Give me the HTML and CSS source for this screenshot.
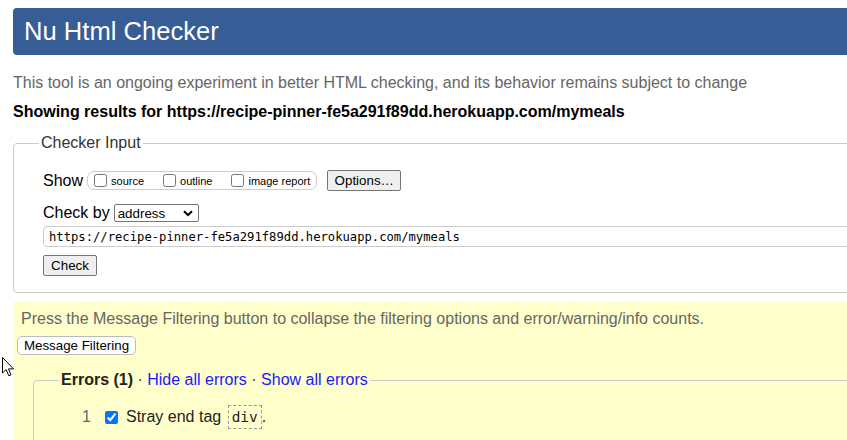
FILE: index.html
```html
<!DOCTYPE html>
<html lang="en">
<head>
<meta charset="utf-8">
<title>Nu Html Checker</title>
<link rel="stylesheet" href="styles.css">
</head>
<body>
<div class="page">
  <h1 class="title">Nu Html Checker</h1>
  <p class="intro">This tool is an ongoing experiment in better HTML checking, and its behavior remains subject to change</p>
  <p class="results-for">Showing results for https://recipe-pinner-fe5a291f89dd.herokuapp.com/mymeals</p>
  <form class="checker-form">
    <fieldset class="checker">
      <legend class="checker-legend">Checker Input</legend>
      <div class="row show-row">
        <span class="row-label">Show</span>
        <span class="show-group">
          <label class="opt"><input type="checkbox" class="cb">source</label>
          <label class="opt"><input type="checkbox" class="cb">outline</label>
          <label class="opt"><input type="checkbox" class="cb">image report</label>
        </span>
        <button type="button" class="btn options-btn">Options…</button>
      </div>
      <div class="row checkby-row">
        <span class="row-label">Check by</span>
        <span class="select">address<svg class="chev" width="10" height="7" viewBox="0 0 10 7"><path d="M1 1.2 L5 5 L9 1.2" fill="none" stroke="#000" stroke-width="2"/></svg></span>
      </div>
      <div class="url">https://recipe-pinner-fe5a291f89dd.herokuapp.com/mymeals</div>
      <button type="button" class="btn check-btn">Check</button>
    </fieldset>
  </form>
  <div class="filters">
    <p class="filters-note">Press the Message Filtering button to collapse the filtering options and error/warning/info counts.</p>
    <button type="button" class="mf-btn">Message Filtering</button>
    <fieldset class="errors">
      <legend class="errors-legend"><b>Errors (1)</b> · <a class="lnk" href="#">Hide all errors</a> · <a class="lnk" href="#">Show all errors</a></legend>
      <div class="msg">
        <span class="msg-num">1</span>
        <input type="checkbox" class="msg-cb" checked>
        <span class="msg-text">Stray end tag <code class="code">div</code>.</span>
      </div>
    </fieldset>
  </div>
</div>
<svg class="cursor" width="13" height="20" viewBox="0 0 13 20"><path d="M0.5 0.5 L0.5 16 L4.2 12.6 L6.8 18.8 L9 17.9 L6.5 11.9 L11.5 11.9 Z" fill="#fff" stroke="#000" stroke-width="1"/></svg>
</body>
</html>
```
FILE: styles.css
```css
html { overflow: hidden; background: #fff; }
body {
  margin: 0;
  padding: 8px 0 0 13px;
  font-family: "Liberation Sans", Arial, sans-serif;
  font-size: 16px;
  color: #000;
}
.page { width: 1000px; }
.title {
  margin: 0;
  height: 47px;
  box-sizing: border-box;
  padding-left: 11px;
  display: flex;
  align-items: center;
  background: #365d96;
  color: #fff;
  font-weight: normal;
  font-size: 25.6px;
  border-radius: 4px 0 0 4px;
}
.intro {
  margin: 19px 0 0;
  color: #666;
  line-height: 18px;
}
.results-for {
  margin: 11px 0 0;
  font-weight: bold;
  line-height: 18px;
}
.checker-form { margin: 13px 0 0; }
.checker {
  margin: 0;
  border: 1px solid #ccc;
  border-radius: 4px;
  padding: 0 0 16px 29px;
}
.checker-legend {
  padding: 0 2px;
  margin-left: -4px;
  line-height: 18px;
  color: #333;
}
.row { display: flex; align-items: center; }
.show-row { margin-top: 18px; height: 21px; }
.row-label { margin-right: 3px; }
.show-group {
  display: inline-flex;
  align-items: center;
  height: 19px;
  box-sizing: border-box;
  border: 1px solid #ccc;
  border-radius: 7px;
  padding: 0 6px 0 6px;
  margin-left: 1px;
  font-size: 11px;
}
.opt { display: inline-flex; align-items: center; margin-right: 19px; }
.opt:last-child { margin-right: 0; }
.cb { margin: 0 4px 0 0; width: 13px; height: 13px; }
.btn {
  font-family: "Liberation Sans", Arial, sans-serif;
  font-size: 13.33px;
  height: 21px;
  padding: 0 7px;
  background: #efefef;
  border: 1px solid #767676;
  border-radius: 2px;
  color: #000;
}
.options-btn { margin-left: 10px; width: 74px; padding: 0; }
.checkby-row { margin-top: 13px; height: 18px; }
.select {
  display: inline-flex;
  align-items: center;
  justify-content: space-between;
  box-sizing: border-box;
  width: 85px;
  height: 18px;
  border: 1px solid #767676;
  border-radius: 2px;
  padding: 0 5px 0 3px;
  font-size: 13.33px;
  margin-left: 1px;
}
.chev { display: block; }
.url {
  margin-top: 4px;
  height: 21px;
  box-sizing: border-box;
  border: 1px solid #ccc;
  border-radius: 4px;
  padding: 0 5px;
  font-family: "DejaVu Sans Mono", monospace;
  font-size: 12.2px;
  line-height: 20px;
  color: #000;
}
.check-btn { margin-top: 8px; width: 54px; padding: 0; }
.filters {
  margin-top: 9px;
  background: #ffffcc;
  padding: 8px 0 20px 4px;
}
.filters-note {
  margin: 0;
  padding-left: 4px;
  color: #666;
  line-height: 18px;
}
.mf-btn {
  margin-top: 8px;
  display: block;
  height: 19px;
  width: 119px;
  padding: 0;
  background: #fff;
  border: 1px solid #bbb;
  border-radius: 5px;
  font-family: "Liberation Sans", Arial, sans-serif;
  font-size: 13.33px;
  color: #000;
}
.errors {
  margin: 16px 0 0 16px;
  border: 1px solid #ccc;
  border-radius: 4px;
  padding: 0 0 40px 48px;
}
.errors-legend {
  padding: 0 2px;
  margin-left: -23px;
  line-height: 18px;
  color: #333;
}
.errors-legend b { color: #222; }
.lnk { color: #1a1aff; text-decoration: none; }
.msg { display: flex; align-items: center; margin-top: 15px; height: 26px; }
.msg-num { color: #666; width: 23px; }
.msg-cb { margin: 0 8px 0 0; width: 13px; height: 13px; }
.msg-text { color: #222; }
.code {
  font-family: "DejaVu Sans Mono", monospace;
  font-size: 14.4px;
  border: 1px dashed #999;
  padding: 3px 3px;
  margin-left: 2px;
}
.cursor { position: absolute; left: 2px; top: 357px; }
```
